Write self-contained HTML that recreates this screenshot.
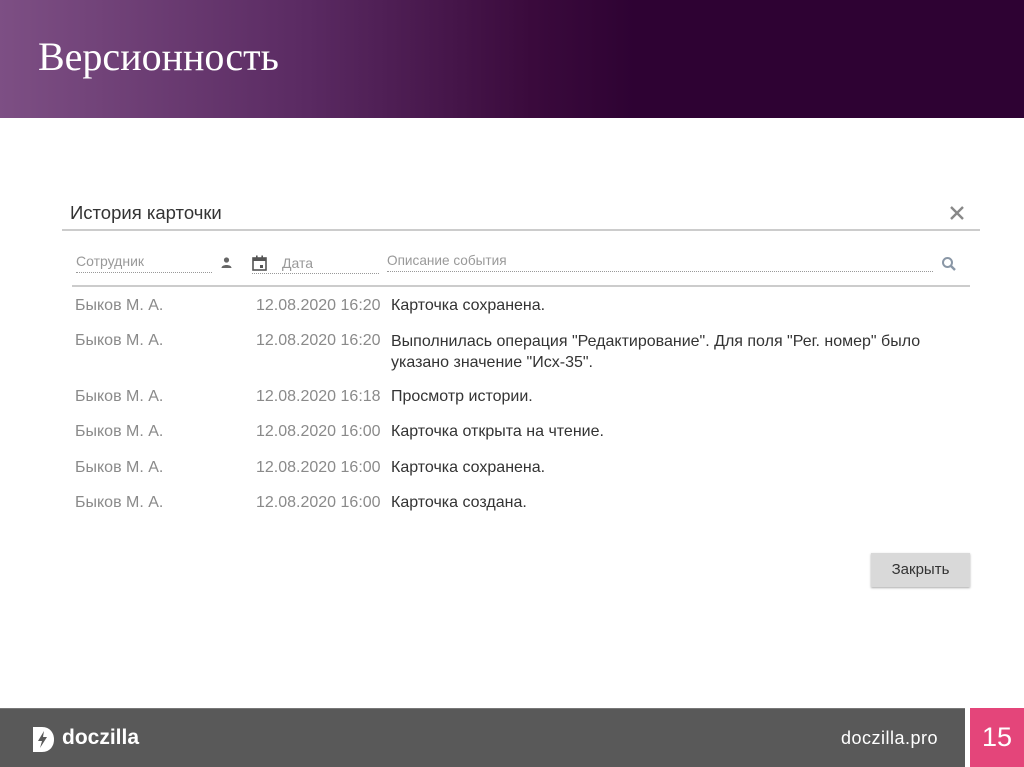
<!DOCTYPE html><html><head><meta charset="utf-8"><style>
*{margin:0;padding:0;box-sizing:border-box}
body{width:1024px;height:767px;position:relative;overflow:hidden;background:#fff;font-family:"Liberation Sans",sans-serif}
.hdr{position:absolute;left:0;top:0;width:1024px;height:118px;background:linear-gradient(90deg,#7d4f84 0%,#5a2a62 30%,#3a0a3c 52%,#2e0233 62%,#2e0233 100%)}
.hdr h1{position:absolute;left:38px;top:33px;font-family:"Liberation Serif",serif;font-weight:normal;color:#fff;font-size:40px}
.a{position:absolute;white-space:nowrap}
.g{color:#8a8a8a;font-size:16px}
.d{color:#333;font-size:16px}
.ft{position:absolute;left:0;top:708px;width:965px;height:59px;background:#595959;border-top:1px solid #777}
.pg{position:absolute;left:970px;top:708px;width:54px;height:59px;background:#e4457a;color:#fff;font-size:27px;text-align:center;line-height:59px;font-weight:300}
</style></head><body>
<div class="hdr"><h1>Версионность</h1></div>

<div class="a" style="left:70px;top:202px;font-size:18.5px;color:#333">История карточки</div>
<svg class="a" style="left:949px;top:205px" width="16" height="16"><path d="M2 2L14 14M14 2L2 14" stroke="#888" stroke-width="2.4"/></svg>
<div class="a" style="left:62px;top:229px;width:918px;height:2px;background:#ccc"></div>

<div class="a" style="left:76px;top:253px;font-size:14px;color:#999">Сотрудник</div>
<div class="a" style="left:76px;top:272px;width:136px;border-top:1px dotted #999"></div>
<svg class="a" style="left:221px;top:257px" width="11" height="11"><circle cx="5.5" cy="3" r="2.6" fill="#666"/><path d="M0.5 11C0.5 7 10.5 7 10.5 11Z" fill="#666"/></svg>
<svg class="a" style="left:252px;top:255px" width="15" height="16"><rect x="1" y="3" width="13" height="12" fill="none" stroke="#555" stroke-width="1.6"/><rect x="1" y="3" width="13" height="3" fill="#555"/><rect x="4" y="0.5" width="1.6" height="3" fill="#555"/><rect x="9.4" y="0.5" width="1.6" height="3" fill="#555"/><rect x="8" y="10" width="3" height="3" fill="#555"/></svg>
<div class="a" style="left:282px;top:255px;font-size:14px;color:#999">Дата</div>
<div class="a" style="left:252px;top:273px;width:127px;border-top:1px dotted #999"></div>
<div class="a" style="left:387px;top:253px;font-size:13.6px;color:#999">Описание события</div>
<div class="a" style="left:387px;top:271px;width:546px;border-top:1px dotted #999"></div>
<svg class="a" style="left:941px;top:256px" width="16" height="16"><circle cx="6.5" cy="6.5" r="4.5" fill="none" stroke="#8a97a6" stroke-width="2"/><path d="M10 10L14 14" stroke="#8a97a6" stroke-width="2.4"/></svg>
<div class="a" style="left:72px;top:285px;width:898px;height:2px;background:#ccc"></div>

<div class="a g" style="left:75px;top:297px">Быков М. А.</div><div class="a g" style="left:256px;top:297px">12.08.2020 16:20</div><div class="a d" style="left:391px;top:297px">Карточка сохранена.</div>
<div class="a g" style="left:75px;top:332px">Быков М. А.</div><div class="a g" style="left:256px;top:332px">12.08.2020 16:20</div><div class="a d" style="left:391px;top:331px;line-height:21px">Выполнилась операция "Редактирование". Для поля "Рег. номер" было<br>указано значение "Исх-35".</div>
<div class="a g" style="left:75px;top:388px">Быков М. А.</div><div class="a g" style="left:256px;top:388px">12.08.2020 16:18</div><div class="a d" style="left:391px;top:388px">Просмотр истории.</div>
<div class="a g" style="left:75px;top:423px">Быков М. А.</div><div class="a g" style="left:256px;top:423px">12.08.2020 16:00</div><div class="a d" style="left:391px;top:423px">Карточка открыта на чтение.</div>
<div class="a g" style="left:75px;top:459px">Быков М. А.</div><div class="a g" style="left:256px;top:459px">12.08.2020 16:00</div><div class="a d" style="left:391px;top:459px">Карточка сохранена.</div>
<div class="a g" style="left:75px;top:494px">Быков М. А.</div><div class="a g" style="left:256px;top:494px">12.08.2020 16:00</div><div class="a d" style="left:391px;top:494px">Карточка создана.</div>

<div class="a" style="left:871px;top:553px;width:99px;height:34px;background:#d9d9d9;box-shadow:0 1px 2px #aaa;font-size:15px;color:#333;text-align:center;line-height:34px">Закрыть</div>

<div class="ft"></div>
<svg class="a" style="left:33px;top:727px" width="22" height="25"><path d="M0 0H9C17 0 21 6 21 12.5C21 19 17 25 9 25H0Z" fill="#fff"/><path d="M11 4L5 14H9L7 21L14 10H10Z" fill="#595959"/></svg>
<div class="a" style="left:62px;top:726px;color:#fff;font-size:21px;font-weight:bold">doczilla</div>
<div class="a" style="left:841px;top:728px;color:#fff;font-size:18px;letter-spacing:0.5px">doczilla.pro</div>
<div class="pg">15</div>
</body></html>
